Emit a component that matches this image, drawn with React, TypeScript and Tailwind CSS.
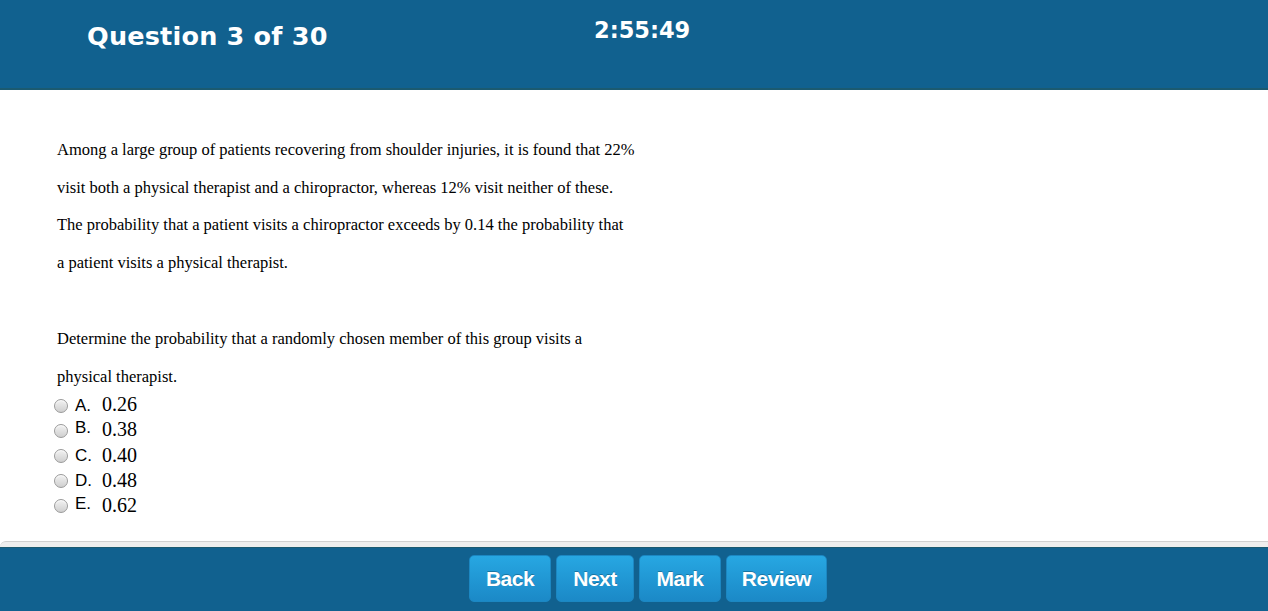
import React from "react";

const options = [
  { l: "A.", v: "0.26" },
  { l: "B.", v: "0.38" },
  { l: "C.", v: "0.40" },
  { l: "D.", v: "0.48" },
  { l: "E.", v: "0.62" },
];

function Radio() {
  return (
    <span className="inline-block w-[14px] h-[14px] rounded-full border border-[#9a9a9a] bg-gradient-to-b from-[#f2f2f2] to-[#cfcfcf] shadow-[inset_0_1px_1px_rgba(255,255,255,0.8)]" />
  );
}

export default function App() {
  const btn =
    "h-[47px] rounded-[5px] bg-gradient-to-b from-[#27a7e2] to-[#1b89c7] border border-[#1c87c2] text-white text-[21px] font-bold [text-shadow:0_-1px_0_rgba(0,0,0,0.25)] flex items-center justify-center tracking-[-0.5px]";
  return (
    <div className="w-[1268px] h-[611px] bg-white flex flex-col overflow-hidden">
      <header className="h-[90px] bg-[#11618f] border-b-2 border-[#1b5a70] flex items-start shrink-0">
        <div className="w-[560px] pl-[87px] pt-[17px] text-white font-bold text-[25.5px] [font-family:'DejaVu_Sans',Verdana,sans-serif] tracking-[0.2px]">
          Question 3 of 30
        </div>
        <div className="pl-[34px] pt-[14px] text-white font-bold text-[22.5px] [font-family:'DejaVu_Sans',Verdana,sans-serif]">
          2:55:49
        </div>
      </header>
      <main className="flex-1 pl-[57px] pt-[41px] [font-family:'Liberation_Serif','Times_New_Roman',serif] text-[16.5px] text-black">
        <p className="leading-[37.7px]">
          Among a large group of patients recovering from shoulder injuries, it is found that 22%
          <br />
          visit both a physical therapist and a chiropractor, whereas 12% visit neither of these.
          <br />
          The probability that a patient visits a chiropractor exceeds by 0.14 the probability that
          <br />
          a patient visits a physical therapist.
        </p>
        <p className="leading-[37.7px] mt-[38.5px]">
          Determine the probability that a randomly chosen member of this group visits a
          <br />
          physical therapist.
        </p>
        <div className="-ml-[3px] -mt-[6px] flex flex-col">
          {options.map((o, i) => (
            <div key={o.l} className={`flex items-center ${i === 1 ? "h-[25.5px]" : "h-[25px]"}`}>
              <span className="mt-[7px] flex"><Radio /></span>
              <span className={`ml-[7px] [font-family:'Liberation_Sans',Arial,sans-serif] text-[17px] w-[27px] leading-none ${i === 1 || i === 4 ? "mt-[1px]" : "mt-[6px]"}`}>{o.l}</span>
              <span className="text-[20px] leading-none mt-[4px]">{o.v}</span>
            </div>
          ))}
        </div>
      </main>
      <div className="h-[6px] bg-[#eeeeee] border-t border-[#d0d0d0] rounded-tl-[6px] shrink-0" />
      <footer className="h-[64px] bg-[#11618f] border-t border-[#1b5a70] shrink-0 flex items-start justify-center pl-[28px] pt-[7px] gap-[5px] [font-family:'Liberation_Sans',Helvetica,Arial,sans-serif]">
        <button className={`${btn} w-[82px]`}>Back</button>
        <button className={`${btn} w-[78px]`}>Next</button>
        <button className={`${btn} w-[82px]`}>Mark</button>
        <button className={`${btn} w-[101px]`}>Review</button>
      </footer>
    </div>
  );
}
